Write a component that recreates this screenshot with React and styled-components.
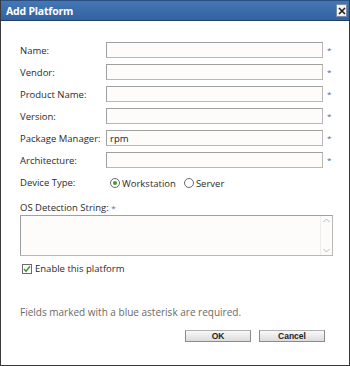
import React, { useState } from "react";
import styled, { createGlobalStyle } from "styled-components";

const GlobalStyle = createGlobalStyle`
  body {
    margin: 0;
    background: #ffffff;
    font-family: "Open Sans", "DejaVu Sans", sans-serif;
  }
`;

const Dialog = styled.div`
  width: 350px;
  height: 366px;
  box-sizing: border-box;
  border: 1px solid #3a3a3a;
  border-top: none;
  background: #ffffff;
  display: flex;
  flex-direction: column;
`;

const TitleBar = styled.div`
  height: 19px;
  background: linear-gradient(#4577b4, #3263a0);
  border-top: 1px solid #2a4f80;
  border-bottom: 1px solid #1f3f6a;
  display: flex;
  align-items: center;
  justify-content: space-between;
  padding: 0 2px 0 5px;
`;

const Title = styled.span`
  color: #ffffff;
  font-family: "Open Sans", "DejaVu Sans", sans-serif;
  font-size: 10.5px;
  font-weight: bold;
  letter-spacing: -0.2px;
`;

const CloseButton = styled.button`
  width: 11px;
  height: 13px;
  padding: 0;
  border: 1px solid #7a8ea8;
  background: #f2f2f2;
  display: flex;
  align-items: center;
  justify-content: center;
  cursor: pointer;
`;

const Body = styled.div`
  flex: 1;
  padding: 21px 16px 0 19px;
  display: flex;
  flex-direction: column;
`;

const FieldGrid = styled.div`
  display: grid;
  grid-template-columns: 86px 217px 10px;
  row-gap: 6px;
  align-items: center;
`;

const Label = styled.label`
  font-size: 9.5px;
  color: #2b2b2b;
`;

const Input = styled.input`
  height: 16px;
  box-sizing: border-box;
  border: 1px solid #a0a0a0;
  border-right-color: #b8b8b8;
  border-bottom-color: #b8b8b8;
  background: #fdfcfa;
  padding: 0 3px;
  font-family: "Open Sans", "DejaVu Sans", sans-serif;
  font-size: 9.5px;
  color: #222;
  outline: none;
`;

const Req = styled.span`
  color: #3a6bb0;
  font-size: 8px;
  padding-left: ${(p) => (p.$tight ? "0" : "4px")};
  line-height: 1;
`;

const RadioGroup = styled.div`
  display: flex;
  align-items: center;
  gap: 8px;
  height: 16px;
  margin-top: 1px;
  margin-left: 4px;
`;

const RadioOption = styled.span`
  display: flex;
  align-items: center;
  gap: 2px;
  font-size: 9.5px;
  color: #2b2b2b;
  cursor: pointer;
`;

const RadioDot = styled.span`
  width: 8px;
  height: 8px;
  border: 1px solid #6a6a6a;
  border-radius: 50%;
  background: #ffffff;
  display: flex;
  align-items: center;
  justify-content: center;
  &::after {
    content: "";
    width: 4px;
    height: 4px;
    border-radius: 50%;
    background: ${(p) => (p.$on ? "#3f9a3a" : "transparent")};
  }
`;

const SectionLabel = styled.div`
  font-size: 9.5px;
  color: #2b2b2b;
  margin-top: 10px;
`;

const TextAreaBox = styled.div`
  margin-top: 1px;
  width: 313px;
  height: 41px;
  box-sizing: border-box;
  border: 1px solid #a0a0a0;
  border-right-color: #b8b8b8;
  border-bottom-color: #b8b8b8;
  display: flex;
  background: #fdfcfa;
`;

const TextArea = styled.textarea`
  flex: 1;
  border: none;
  resize: none;
  background: transparent;
  outline: none;
  padding: 2px 3px;
  font-family: "Open Sans", "DejaVu Sans", sans-serif;
  font-size: 9.5px;
`;

const ScrollBar = styled.div`
  width: 11px;
  display: flex;
  flex-direction: column;
  justify-content: space-between;
  align-items: center;
  padding: 2px 0;
  border-left: 1px solid #ededed;
`;

const CheckRow = styled.div`
  display: flex;
  align-items: center;
  gap: 3px;
  margin-top: 6px;
  margin-left: 2px;
  font-size: 9.5px;
  color: #2b2b2b;
`;

const CheckBox = styled.span`
  width: 8px;
  height: 8px;
  border: 1px solid #6a6a6a;
  background: #ffffff;
  display: flex;
  align-items: center;
  justify-content: center;
`;

const Note = styled.div`
  font-size: 10px;
  color: #6a6a6a;
  margin-top: 30px;
`;

const Buttons = styled.div`
  display: flex;
  justify-content: flex-end;
  gap: 8px;
  margin-top: 11px;
  padding-right: 8px;
`;

const Button = styled.button`
  width: 66px;
  height: 12px;
  padding: 0;
  box-sizing: border-box;
  border: 1px solid #8a8a8a;
  border-top-color: #b0b0b0;
  background: linear-gradient(#f8f8f8, #dcdcdc);
  font-family: "Liberation Sans", Arial, sans-serif;
  font-size: 8.5px;
  font-weight: bold;
  color: #222;
  line-height: 10px;
  cursor: pointer;
`;

const fields = [
  { label: "Name:", value: "" },
  { label: "Vendor:", value: "" },
  { label: "Product Name:", value: "" },
  { label: "Version:", value: "" },
  { label: "Package Manager:", value: "rpm" },
  { label: "Architecture:", value: "" },
];

const App = () => {
  const [device, setDevice] = useState("workstation");
  const [enabled, setEnabled] = useState(true);

  return (
    <>
      <GlobalStyle />
      <Dialog>
        <TitleBar>
          <Title>Add Platform</Title>
          <CloseButton aria-label="Close">
            <svg width="8" height="8" viewBox="0 0 8 8">
              <path d="M1 1L7 7M7 1L1 7" stroke="#222" strokeWidth="1.6" />
            </svg>
          </CloseButton>
        </TitleBar>
        <Body>
          <FieldGrid>
            {fields.map((f) => (
              <React.Fragment key={f.label}>
                <Label>{f.label}</Label>
                <Input defaultValue={f.value} />
                <Req>*</Req>
              </React.Fragment>
            ))}
            <Label>Device Type:</Label>
            <RadioGroup>
              <RadioOption onClick={() => setDevice("workstation")}>
                <RadioDot $on={device === "workstation"} />
                Workstation
              </RadioOption>
              <RadioOption onClick={() => setDevice("server")}>
                <RadioDot $on={device === "server"} />
                Server
              </RadioOption>
            </RadioGroup>
            <span />
          </FieldGrid>
          <SectionLabel>
            OS Detection String: <Req $tight>*</Req>
          </SectionLabel>
          <TextAreaBox>
            <TextArea />
            <ScrollBar>
              <svg width="7" height="5" viewBox="0 0 7 5">
                <path d="M0.5 4L3.5 1L6.5 4" fill="none" stroke="#b8b8b8" strokeWidth="1" />
              </svg>
              <svg width="7" height="5" viewBox="0 0 7 5">
                <path d="M0.5 1L3.5 4L6.5 1" fill="none" stroke="#b8b8b8" strokeWidth="1" />
              </svg>
            </ScrollBar>
          </TextAreaBox>
          <CheckRow onClick={() => setEnabled(!enabled)}>
            <CheckBox>
              {enabled && (
                <svg width="8" height="8" viewBox="0 0 8 8">
                  <path d="M1 4L3 6.3L7 1.3" fill="none" stroke="#3f9a3a" strokeWidth="1.5" />
                </svg>
              )}
            </CheckBox>
            Enable this platform
          </CheckRow>
          <Note>Fields marked with a blue asterisk are required.</Note>
          <Buttons>
            <Button>OK</Button>
            <Button>Cancel</Button>
          </Buttons>
        </Body>
      </Dialog>
    </>
  );
};

export default App;
